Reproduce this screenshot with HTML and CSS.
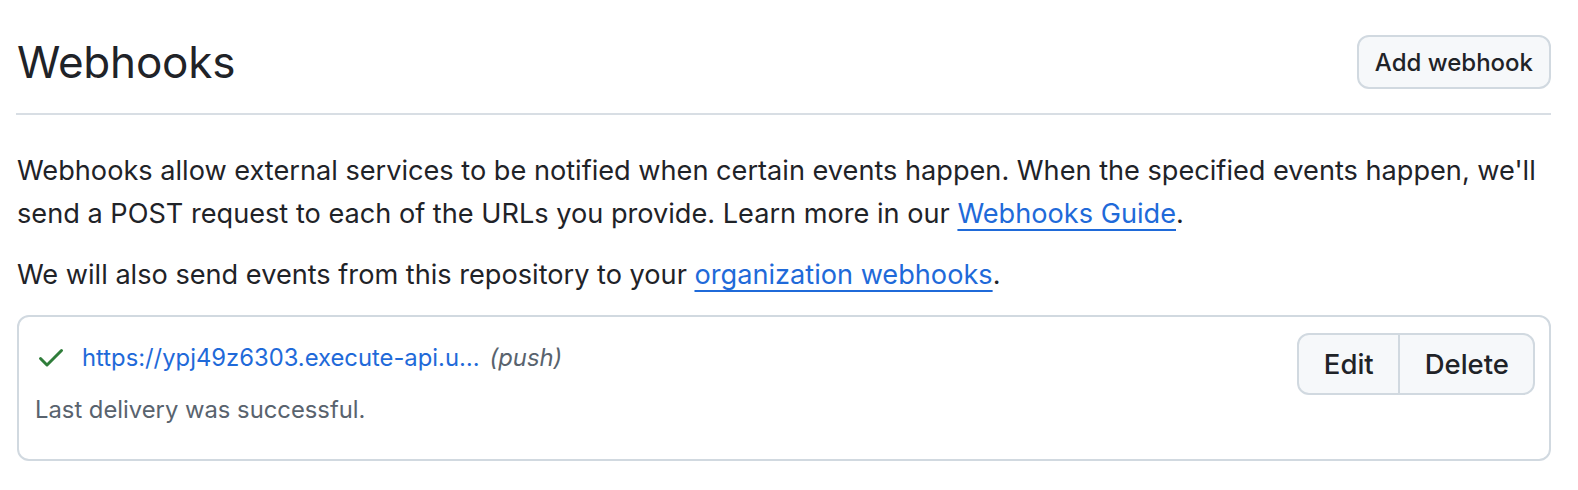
FILE: index.html
```html
<!DOCTYPE html>
<html lang="en">
<head>
<meta charset="utf-8">
<title>Webhooks</title>
<link rel="stylesheet" href="styles.css">
</head>
<body>
<div class="page">
  <div class="subhead">
    <h2 class="subhead-heading">Webhooks</h2>
    <button class="btn btn-add" type="button">Add webhook</button>
  </div>
  <p class="desc">Webhooks allow external services to be notified when certain events happen. When the specified events happen, we'll send a POST request to each of the URLs you provide. Learn more in our <a class="link" href="#">Webhooks Guide</a>.</p>
  <p class="desc desc-second">We will also send events from this repository to your <a class="link" href="#">organization webhooks</a>.</p>
  <div class="box">
    <div class="hook">
      <div class="hook-info">
        <div class="hook-title">
          <svg class="icon-check" viewBox="0 0 16 16" width="32" height="32" aria-hidden="true"><path d="M13.78 4.22a.75.75 0 0 1 0 1.06l-7.25 7.25a.75.75 0 0 1-1.06 0L2.22 9.28a.751.751 0 0 1 .018-1.042.751.751 0 0 1 1.042-.018L6 10.94l6.72-6.72a.75.75 0 0 1 1.06 0Z"/></svg>
          <a class="hook-url" href="#">https://ypj49z6303.execute-api.u…</a>
          <em class="hook-events">(push)</em>
        </div>
        <div class="hook-status">Last delivery was successful.</div>
      </div>
      <div class="btn-group">
        <button class="btn btn-group-item" type="button">Edit</button>
        <button class="btn btn-group-item" type="button">Delete</button>
      </div>
    </div>
  </div>
</div>
</body>
</html>
```

FILE: styles.css
```css
html, body {
  margin: 0;
  padding: 0;
  background: #ffffff;
}

body {
  font-family: Inter, "Liberation Sans", Arial, sans-serif;
  color: #1f2328;
}

.page {
  padding: 35px 27px 0 16px;
}

.subhead {
  display: flex;
  align-items: center;
  justify-content: space-between;
  padding-bottom: 24px;
  border-bottom: 2px solid #d8dee4;
}

.subhead-heading {
  margin: 0;
  padding-left: 1px;
  font-size: 44px;
  font-weight: 400;
  line-height: 54px;
  letter-spacing: -0.2px;
}

.btn {
  font-family: inherit;
  color: #1f2328;
  background: #f6f8fa;
  border: 2px solid #d1d9e0;
  cursor: pointer;
}

.btn-add {
  height: 54px;
  padding: 0 16px;
  font-size: 24px;
  font-weight: 500;
  border-radius: 12px;
}

.desc {
  margin: 34px 0 0 1px;
  font-size: 27.15px;
  line-height: 43px;
}

.desc-second {
  margin-top: 18px;
}

.link {
  color: #1f6ad9;
  text-decoration: underline;
  text-decoration-thickness: 2px;
  text-underline-offset: 6px;
}

.box {
  margin-top: 19px;
  margin-left: 1px;
  border: 2px solid #d1d9e0;
  border-radius: 12px;
}

.hook {
  display: flex;
  align-items: flex-start;
  justify-content: space-between;
  padding: 16px 14px 33px 16px;
}

.hook-info {
  padding-top: 6px;
}

.hook-title {
  display: flex;
  align-items: center;
  height: 36px;
}

.icon-check {
  flex: none;
  fill: #2f7d3a;
  margin-right: 15px;
}

.hook-url {
  color: #1f6ad9;
  text-decoration: none;
  font-size: 23.8px;
}

.hook-events {
  margin-left: 10px;
  font-size: 23.8px;
  color: #59636e;
}

.hook-status {
  margin-top: 19px;
  font-size: 23.8px;
  line-height: 32px;
  color: #59636e;
}

.btn-group {
  display: flex;
}

.btn-group-item {
  height: 62px;
  padding: 0 24px 0 25px;
  font-size: 27.5px;
  font-weight: 500;
}

.btn-group-item:first-child {
  border-radius: 12px 0 0 12px;
}

.btn-group-item + .btn-group-item {
  margin-left: -2px;
  border-radius: 0 12px 12px 0;
}
```
